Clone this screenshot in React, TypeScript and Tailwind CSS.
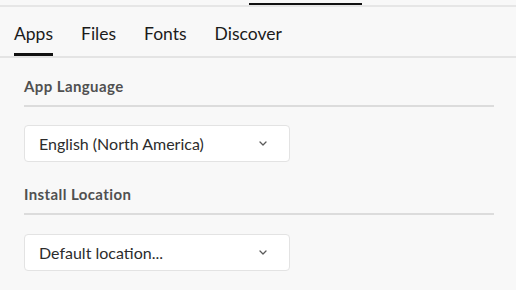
const tabs = ["Apps", "Files", "Fonts", "Discover"];

function Chevron() {
  return (
    <svg width="8" height="5" viewBox="0 0 8 5" fill="none" className="text-[#5a5a5a]">
      <path d="M1 1l3 3 3-3" stroke="currentColor" strokeWidth="1.3" strokeLinecap="round" strokeLinejoin="round" />
    </svg>
  );
}

function Select({ label, className = "" }: { label: string; className?: string }) {
  return (
    <div
      className={`flex items-center justify-between w-[266px] h-[37px] bg-white border border-[#e3e3e3] rounded-[4px] pl-[14px] pr-[22px] ${className}`}
    >
      <span className="text-[16px] text-[#2c2c2c]">{label}</span>
      <Chevron />
    </div>
  );
}

export default function App() {
  return (
    <div
      className="w-[516px] h-[290px] bg-[#f8f8f8] overflow-hidden"
      style={{ fontFamily: "Lato, 'Open Sans', sans-serif" }}
    >
      <div className="h-[7px] pt-[3px] border-b-2 border-[#e6e6e6]">
        <div className="ml-[249px] w-[113px] h-[2px] bg-[#111]" />
      </div>

      <nav className="flex gap-[28px] pl-[14px] h-[51px] border-b-2 border-[#e4e4e4]">
        {tabs.map((tab, i) => (
          <div
            key={tab}
            className={`flex items-end pb-[6px] text-[17.5px] text-[#1b1b1b] border-b-[3px] ${
              i === 0 ? "border-[#111]" : "border-transparent"
            }`}
          >
            {tab}
          </div>
        ))}
      </nav>

      <div className="pl-[24px] pr-[22px]">
        <h3 className="mt-[18px] pb-[9px] border-b-2 border-[#dcdcdc] text-[15px] leading-[20px] tracking-[0.4px] font-bold text-[#505050]">
          App Language
        </h3>
        <Select label="English (North America)" className="mt-[18px]" />

        <h3 className="mt-[22px] pb-[9px] border-b-2 border-[#dcdcdc] text-[15px] leading-[20px] tracking-[0.4px] font-bold text-[#505050]">
          Install Location
        </h3>
        <Select label="Default location..." className="mt-[19px]" />
      </div>
    </div>
  );
}
